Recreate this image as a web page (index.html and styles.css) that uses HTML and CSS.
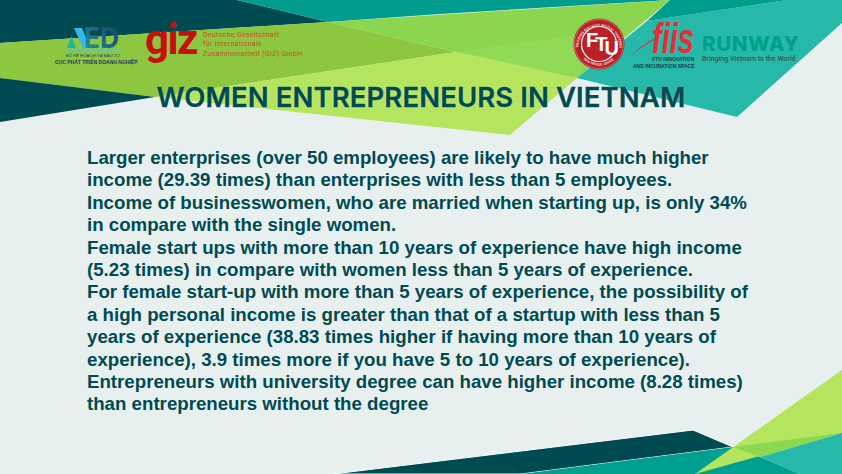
FILE: index.html
```html
<!DOCTYPE html>
<html lang="en">
<head>
  <meta charset="UTF-8" />
  <title>Women Entrepreneurs in Vietnam</title>
  <link rel="stylesheet" href="styles.css">
</head>
<body>
  <div class="slide">
    <!-- background shapes -->
    <svg class="bg" viewBox="0 0 842 474" width="842" height="474">
      <polygon fill="#004b52" points="0,0 237,0 328,22 0,43" />
      <polygon fill="#009c8e" points="237,0 670,0 440,14 328,22" />
      <polygon fill="#8dc63f" points="0,43 328,22 456,52 155,97 0,78" />
      <polygon fill="#004b52" points="0,78 155,97 0,122" />
      <polygon fill="#8bd64e" points="328,22 670,0 577,78 456,52" />
      <polygon fill="#90da55" points="456,52 612,30 577,78" />
      <polygon fill="#b5e55e" points="155,97 456,52 577,78 510,135" />
      <polygon fill="#26b8a8" points="670,0 842,0 842,23 737,117 577,78 647,21 787,0" />
      <polygon fill="#009c8e" points="670,0 787,0 647,21" />

      <polygon fill="#004b52" stroke="#ffffff" stroke-width="1" points="333,474 693,430 733,447 521,474" />
      <polygon fill="#009f90" points="521,474 733,447 760,457 800,474 695,474" />
      <polygon fill="#b5e55e" points="695,474 842,370 842,433" />
      <polygon fill="#8cd94f" points="733,447 842,433 760,457" />
      <polygon fill="#26b8a8" points="760,457 842,433 842,474 800,474" />
    </svg>

    <header class="logos">
      <div class="logo-group">
        <div class="aed">
          <svg class="aed-mark" viewBox="0 0 76 24" width="76" height="24">
            <defs>
              <linearGradient id="edFill" x1="0" y1="1" x2="1" y2="0">
                <stop offset="0" stop-color="#1f9ab0" />
                <stop offset="1" stop-color="#1e3560" />
              </linearGradient>
            </defs>
            <polygon fill="#1db89a" points="12,21 16.500,9 21,21" />
            <polygon fill="#35b8ee" points="19,1 27,1 35,21 28,21" />
            <text class="aed-letters" x="29" y="21" textLength="35" lengthAdjust="spacingAndGlyphs" fill="url(#edFill)">ED</text>
            <line x1="12" y1="23.500" x2="64" y2="23.500" stroke="#5cc7b5" stroke-width="1" />
          </svg>
          <div class="aed-top">BỘ KẾ HOẠCH VÀ ĐẦU TƯ</div>
          <div class="aed-bottom">CỤC PHÁT TRIỂN DOANH NGHIỆP</div>
        </div>
        <div class="giz">
          <div class="giz-mark">giz</div>
          <div class="giz-name">Deutsche Gesellschaft<br>für Internationale<br>Zusammenarbeit (GIZ) GmbH</div>
        </div>
      </div>

      <div class="logo-group">
        <svg class="ftu" viewBox="-26 -26 52 52" width="52" height="52">
          <defs>
            <path id="ftuTop" d="M -20.500 3 A 20.500 20.500 0 1 1 20.500 3" />
            <path id="ftuBottom" d="M -16 15 A 22.500 22.500 0 0 0 16 15" />
          </defs>
          <circle r="25.500" fill="#b81f26" />
          <circle r="24.500" fill="none" stroke="#e8a0a0" stroke-width="0.500" />
          <circle r="17.500" fill="#bd1f26" stroke="#ffffff" stroke-width="1.200" />
          <text class="ftu-ring"><textPath href="#ftuTop" startOffset="50%" text-anchor="middle">TRƯỜNG ĐẠI HỌC NGOẠI THƯƠNG</textPath></text>
          <text class="ftu-ring"><textPath href="#ftuBottom" startOffset="50%" text-anchor="middle">FOREIGN TRADE UNIVERSITY</textPath></text>
          <text class="ftu-letter" x="-13" y="3">F<tspan dx="-3" dy="4">T</tspan><tspan dx="-3" dy="4">U</tspan></text>
        </svg>

        <div class="fiis">
          <svg class="fiis-mark" viewBox="0 0 61 34" width="61" height="34">
            <path fill="#ed2b33" d="M0 32 C 8 24, 17 18, 26 15 C 17 20, 9 25, 0 32 Z" />
            <text class="fiis-letters" x="19" y="31" textLength="42" lengthAdjust="spacingAndGlyphs">fiis</text>
          </svg>
          <div class="fiis-name">FTU INNOVATION<br>AND INCUBATION SPACE</div>
        </div>

        <div class="runway">
          <div class="runway-name">RUNWAY</div>
          <div class="runway-tag">Bringing Vietnam to the World</div>
        </div>
      </div>
    </header>

    <h1 class="title">WOMEN ENTREPRENEURS IN VIETNAM</h1>

    <div class="content">
      <p>Larger enterprises (over 50 employees) are likely to have much higher<br>income (29.39 times) than enterprises with less than 5 employees.</p>
      <p>Income of businesswomen, who are married when starting up, is only 34%<br>in compare with the single women.</p>
      <p>Female start ups with more than 10 years of experience have high income<br>(5.23 times) in compare with women less than 5 years of experience.</p>
      <p>For female start-up with more than 5 years of experience, the possibility of<br>a high personal income is greater than that of a startup with less than 5<br>years of experience (38.83 times higher if having more than 10 years of<br>experience), 3.9 times more if you have 5 to 10 years of experience).</p>
      <p>Entrepreneurs with university degree can have higher income (8.28 times)<br>than entrepreneurs without the degree</p>
    </div>
  </div>
</body>
</html>
```

FILE: styles.css
```css
body { margin: 0; font-family: "Liberation Sans", Arial, sans-serif; background-color: #e8f0ef; }

.slide {
  position: relative;
  width: 842px;
  height: 474px;
  overflow: hidden;
  background-color: #e8f0ef;
  color: #004b52;
}

.bg {
  position: absolute;
  left: 0;
  top: 0;
}

.logos {
  position: relative;
  display: flex;
  justify-content: space-between;
  align-items: flex-start;
  height: 62px;
  padding: 18px 44px 0 55px;
}

.logo-group { display: flex; align-items: flex-start; }

/* AED */
.aed { width: 76px; padding-top: 9px; text-align: center; color: #1e3a5f; }
.aed-mark { display: block; overflow: visible; }
.aed-letters { font-family: Inter, sans-serif; font-weight: 700; font-size: 29px; }
.aed-top { margin-top: 2px; font-size: 4.300px; line-height: 6px; white-space: nowrap; }
.aed-bottom { font-size: 5px; line-height: 7px; font-weight: bold; white-space: nowrap; }

/* GIZ */
.giz { display: flex; margin-left: 14px; }
.giz-mark {
  font-family: Roboto, sans-serif;
  font-weight: 700;
  font-size: 42px;
  line-height: 44px;
  letter-spacing: -1.500px;
  color: #c80f0f;
  width: 58px;
}
.giz-name {
  margin-top: 13px;
  font-family: Roboto, sans-serif;
  font-size: 6.800px;
  line-height: 9.400px;
  letter-spacing: 0.400px;
  color: #c4502a;
  white-space: nowrap;
}

/* FTU */
.ftu { display: block; }
.ftu-ring { font-size: 3.800px; font-weight: bold; fill: #f6dcdc; }
.ftu-letter { font-size: 20px; font-weight: bold; fill: #ffffff; }

/* FIIS */
.fiis { width: 61px; margin-left: 8px; padding-top: 4px; text-align: right; }
.fiis-mark { display: block; overflow: visible; }
.fiis-letters { font-weight: bold; font-style: italic; font-size: 42px; fill: #ed2b33; }
.fiis-name {
  font-size: 5px;
  line-height: 6.500px;
  font-weight: bold;
  color: #1d3d4a;
  white-space: nowrap;
}

/* RUNWAY */
.runway { width: 96px; margin-left: 8px; padding-top: 15px; }
.runway-name {
  font-family: Inter, sans-serif;
  font-weight: 800;
  font-size: 20.500px;
  line-height: 21px;
  letter-spacing: 0.600px;
  color: #00a08e;
  white-space: nowrap;
}
.runway-tag {
  font-family: Roboto, sans-serif;
  font-weight: 500;
  font-size: 7px;
  line-height: 10px;
  color: #2f5c5a;
  white-space: nowrap;
}

.title {
  position: relative;
  margin: 0;
  font-family: Inter, sans-serif;
  font-size: 27.500px;
  line-height: 34px;
  font-weight: 600;
  letter-spacing: 0.100px;
  text-align: center;
  color: #004b52;
  -webkit-text-stroke: 0.3px #004b52;
  text-shadow: 0 0 2px rgba(255, 255, 255, 0.5);
}

.content {
  position: relative;
  width: 700px;
  margin: 33px 0 0 87px;
  font-size: 18.680px;
  line-height: 22.400px;
  font-weight: bold;
}

.content p { margin: 0; }
```
